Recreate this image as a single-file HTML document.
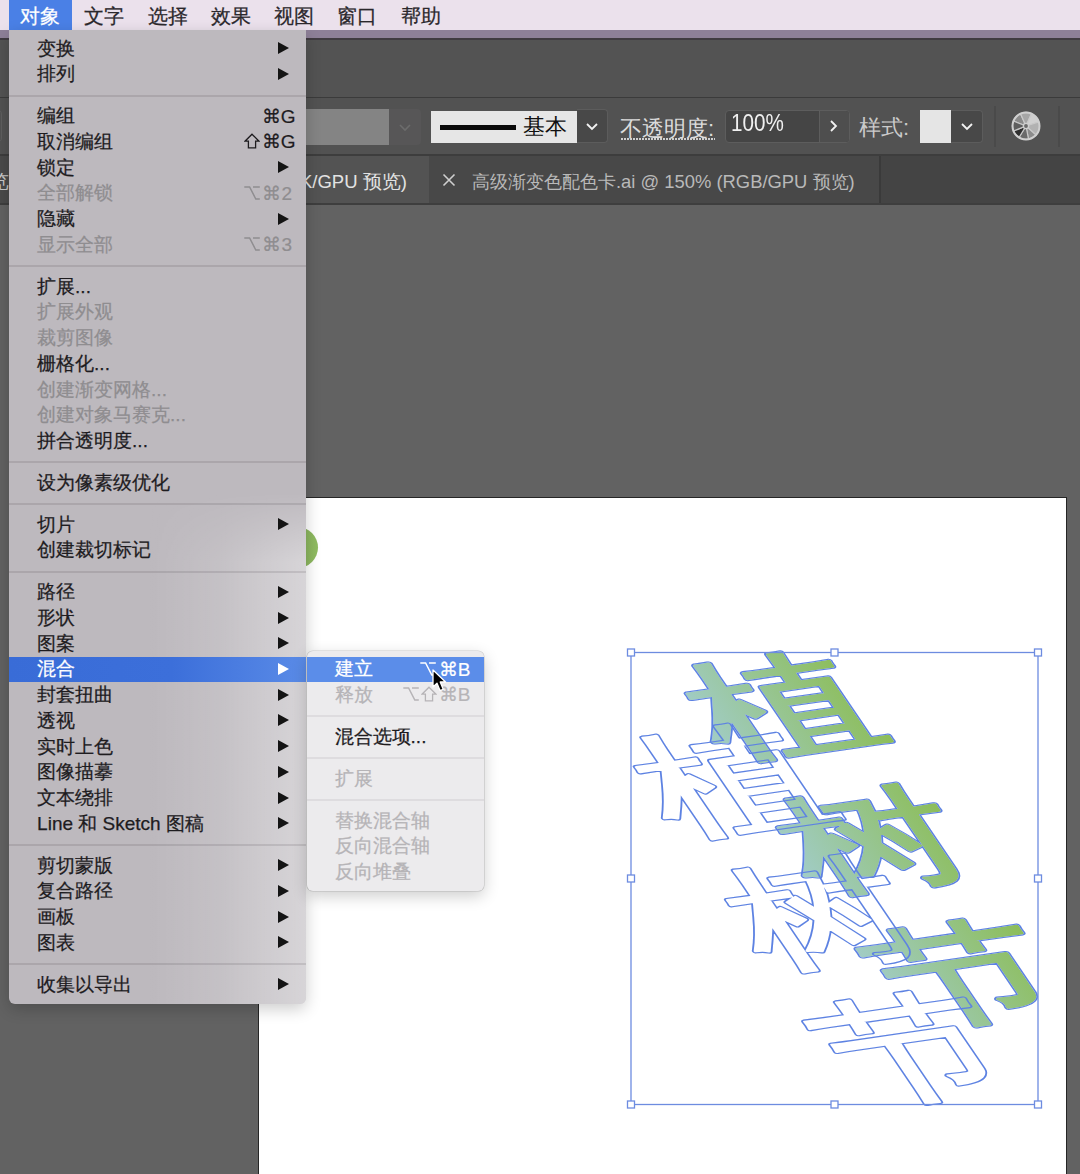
<!DOCTYPE html>
<html><head><meta charset="utf-8">
<style>
*{box-sizing:border-box;margin:0;padding:0}
html,body{width:1080px;height:1174px;overflow:hidden;background:#626262;font-family:"Liberation Sans",sans-serif}
.a{position:absolute}
.mb{position:absolute;top:0.6px;height:30px;line-height:30px;font-size:19.7px;color:#2b282c;-webkit-text-stroke:0.25px currentColor}
.menu{position:absolute;font-size:19px;color:#1e1c1f}
.t{-webkit-text-stroke:0.25px currentColor}
.row{position:absolute;left:0;right:0;height:25.7px;line-height:25.7px;white-space:nowrap}
.row .t{position:absolute;left:28.1px;top:-0.3px}
.row .k{position:absolute;right:10.5px;top:0;font-size:19px;-webkit-text-stroke:0.2px currentColor}
.dis{color:#8f8d90}
.sep{position:absolute;left:0;right:0;height:2px;background:rgba(40,30,40,0.12)}
.sub .sep{background:rgba(40,30,40,0.07)}
.sub .dis{color:#b6b4b7}
.sub .row .k{right:13px}
.arr{position:absolute;right:17px;width:0;height:0;border-top:6.5px solid transparent;border-bottom:6.5px solid transparent;border-left:11.5px solid #141414}
.tbt{position:absolute;font-size:22px;white-space:nowrap}
</style></head><body>
<!-- menubar -->
<div class="a" style="left:0;top:0;width:1080px;height:30px;background:#ebe1ec">
  <div class="a" style="left:9px;top:0;width:63px;height:30px;background:#4a80e6"></div>
  <div class="mb" style="left:19.8px;color:#fff">对象</div>
  <div class="mb" style="left:84.2px">文字</div>
  <div class="mb" style="left:148px">选择</div>
  <div class="mb" style="left:210.5px">效果</div>
  <div class="mb" style="left:273.5px">视图</div>
  <div class="mb" style="left:337.3px">窗口</div>
  <div class="mb" style="left:401px">帮助</div>
</div>
<div class="a" style="left:0;top:30px;width:1080px;height:8px;background:#8e8098"></div>
<div class="a" style="left:0;top:38px;width:1080px;height:2px;background:#403b41"></div>
<div class="a" style="left:0;top:40px;width:1080px;height:57px;background:#535353"></div>
<div class="a" style="left:0;top:97px;width:1080px;height:1px;background:#3b3b3b"></div>
<div class="a" style="left:0;top:98px;width:1080px;height:56px;background:#525252"></div>
<div class="a" style="left:0;top:154px;width:1080px;height:2px;background:#3d3d3d"></div>
<div class="a" style="left:0;top:156px;width:1080px;height:47px;background:#484848"></div>
<div class="a" style="left:0;top:156px;width:429px;height:47px;background:#535353"></div><div class="a" style="left:0;top:156px;width:9px;height:47px;background:#4a4a4a"></div>
<div class="a" style="left:0;top:203px;width:1080px;height:2px;background:#3e3e3e"></div>

<!-- control bar -->
<div class="a" style="left:-20px;top:109px;width:22px;height:34px;border:1.5px solid #5e5e5e;border-radius:5px"></div>
<div class="a" style="left:300px;top:108.7px;width:89px;height:36px;background:#848484"></div>
<div class="a" style="left:389px;top:108.7px;width:32px;height:36px;background:#575657;border-radius:0 4px 4px 0"></div>
<svg class="a" style="left:397px;top:119px" width="16" height="16"><polyline points="3,6 8,11 13,6" fill="none" stroke="#6c6c6c" stroke-width="1.6"/></svg>
<div class="a" style="left:430.7px;top:111px;width:146px;height:32px;background:#e6e6e6"></div>
<div class="a" style="left:439.6px;top:125px;width:76px;height:4.5px;background:#0a0a0a"></div>
<div class="tbt" style="left:523px;top:111px;line-height:32px;color:#111">基本</div>
<div class="a" style="left:576.7px;top:109.4px;width:31px;height:33.5px;background:#484848;border:1px solid #5c5c5c;border-left:none;border-radius:0 4px 4px 0"></div>
<svg class="a" style="left:584px;top:118px" width="16" height="16"><polyline points="3,6 8,11 13,6" fill="none" stroke="#f2f2f2" stroke-width="1.8"/></svg>
<div class="tbt" style="left:620px;top:112.5px;line-height:32px;color:#dcdcdc">不透明度:</div>
<div class="a" style="left:621px;top:137.8px;width:94px;height:1.8px;background:repeating-linear-gradient(to right,#d0d0d0 0,#d0d0d0 2px,transparent 2px,transparent 3px)"></div>
<div class="a" style="left:725px;top:109.7px;width:125px;height:33.3px;background:#454545;border:1px solid #5d5d5d;border-radius:4px"></div>
<div class="a" style="left:819px;top:110.7px;width:30px;height:31.3px;background:#4e4e4e;border-left:1px solid #5d5d5d;border-radius:0 3px 3px 0"></div>
<svg class="a" style="left:826px;top:118px" width="16" height="16"><polyline points="5,3 10,8 5,13" fill="none" stroke="#f2f2f2" stroke-width="1.8"/></svg>
<div class="tbt" style="left:731px;top:108px;line-height:30px;color:#f0f0f0;font-size:24px;transform:scaleX(0.86);transform-origin:0 0">100%</div>
<div class="tbt" style="left:859px;top:112px;line-height:32px;color:#cacaca">样式:</div>
<div class="a" style="left:919.6px;top:110.4px;width:32px;height:32.6px;background:#e5e5e5"></div>
<div class="a" style="left:951.4px;top:109.7px;width:31.6px;height:33.3px;background:#484848;border:1px solid #5c5c5c;border-left:none;border-radius:0 4px 4px 0"></div>
<svg class="a" style="left:959px;top:118px" width="16" height="16"><polyline points="3,6 8,11 13,6" fill="none" stroke="#f2f2f2" stroke-width="1.8"/></svg>
<div class="a" style="left:994px;top:106px;width:1.5px;height:41px;background:#4a4a4a"></div>
<div class="a" style="left:1058px;top:106px;width:1.5px;height:41px;background:#4a4a4a"></div>
<svg class="a" style="left:1010px;top:110px" width="32" height="32" viewBox="-16 -16 32 32">
  <g stroke="#c9c9c9" stroke-width="1.2">
    <path d="M0 0 L-12.6 -5 A13.5 13.5 0 0 1 -5.5 -12.3Z" fill="#8a8a8a"/>
    <path d="M0 0 L-5.5 -12.3 A13.5 13.5 0 0 1 5.5 -12.3Z" fill="#a6a6a6"/>
    <path d="M0 0 L5.5 -12.3 A13.5 13.5 0 0 1 12.8 -4Z" fill="#d0d0d0"/>
    <path d="M0 0 L12.8 -4 A13.5 13.5 0 0 1 10 9Z" fill="#b2b2b2"/>
    <path d="M0 0 L10 9 A13.5 13.5 0 0 1 2.5 13.2Z" fill="#8c8c8c"/>
    <path d="M0 0 L2.5 13.2 A13.5 13.5 0 0 1 -7 11.5Z" fill="#6a6a6a"/>
    <path d="M0 0 L-7 11.5 A13.5 13.5 0 0 1 -12.5 5Z" fill="#2e2e2e"/>
    <path d="M0 0 L-12.5 5 A13.5 13.5 0 0 1 -12.6 -5Z" fill="#5e5e5e"/>
  </g>
  <circle r="13.5" fill="none" stroke="#cfcfcf" stroke-width="2"/>
  <circle r="2.6" fill="#6a6a6a" stroke="#cfcfcf" stroke-width="1.4"/>
</svg>

<!-- tabs -->
<div class="tbt" style="left:-10px;top:166px;line-height:32px;color:#c8c8c8;font-size:18.5px">览</div>
<div class="tbt" style="left:300px;top:166px;line-height:32px;color:#e2e2e2;font-size:18.5px">K/GPU 预览)</div>
<svg class="a" style="left:442px;top:173px" width="14" height="14"><path d="M1.5 1.5L12.5 12.5M12.5 1.5L1.5 12.5" stroke="#cfcfcf" stroke-width="1.6"/></svg>
<div class="a" style="left:879px;top:156px;width:1.5px;height:47px;background:#3a3a3a"></div><div class="a" style="left:880.5px;top:156px;width:200px;height:47px;background:#444"></div>
<div class="tbt" style="left:472px;top:166px;line-height:32px;color:#b9b9b9;font-size:18.4px">高级渐变色配色卡.ai @ 150% (RGB/GPU 预览)</div>

<!-- artboard -->
<div class="a" style="left:258px;top:497px;width:809px;height:700px;background:#fff;border:1px solid #262626"></div>
<div class="a" style="left:277px;top:526.8px;width:41.2px;height:41.2px;border-radius:50%;background:linear-gradient(to right,#84ab5e,#8fbb60)"></div>

<!-- artwork -->
<svg class="a" style="left:0;top:0;font-family:Liberation Sans,sans-serif;font-size:133.0px" width="1080" height="1174" viewBox="0 0 1080 1174">
<defs><linearGradient id="gr" x1="0" y1="0" x2="1" y2="0"><stop offset="0" stop-color="#a1ccc5"/><stop offset="1" stop-color="#8cbd57"/></linearGradient>
<mask id="m1" maskUnits="userSpaceOnUse" x="0" y="0" width="1080" height="1174">
<g transform="matrix(1.2700 -0.1841 0.5304 0.7800 660.00 664.00)" font-weight="400"><text x="0" y="117.04" fill="#fff" stroke="#fff" stroke-width="6.10" stroke-linejoin="round" stroke-linecap="round">植</text><text x="0" y="288.19" fill="#fff" stroke="#fff" stroke-width="6.10" stroke-linejoin="round" stroke-linecap="round">树</text><text x="0" y="459.35" fill="#fff" stroke="#fff" stroke-width="6.10" stroke-linejoin="round" stroke-linecap="round">节</text></g>
<g transform="matrix(1.2700 -0.1841 0.5304 0.7800 660.00 664.00)" font-weight="400"><text x="0" y="117.04" fill="#000" stroke="#000" stroke-width="3.50" stroke-linejoin="round" stroke-linecap="round">植</text><text x="0" y="288.19" fill="#000" stroke="#000" stroke-width="3.50" stroke-linejoin="round" stroke-linecap="round">树</text><text x="0" y="459.35" fill="#000" stroke="#000" stroke-width="3.50" stroke-linejoin="round" stroke-linecap="round">节</text></g>
</mask>
<mask id="m2" maskUnits="userSpaceOnUse" x="0" y="0" width="1080" height="1174">
<g transform="matrix(1.2700 -0.1841 0.5622 0.8268 607.00 735.00)" font-weight="400"><text x="0" y="117.04" fill="#fff" stroke="#fff" stroke-width="5.10" stroke-linejoin="round" stroke-linecap="round">植</text><text x="0" y="278.51" fill="#fff" stroke="#fff" stroke-width="5.10" stroke-linejoin="round" stroke-linecap="round">树</text><text x="0" y="439.97" fill="#fff" stroke="#fff" stroke-width="5.10" stroke-linejoin="round" stroke-linecap="round">节</text></g>
<g transform="matrix(1.2700 -0.1841 0.5622 0.8268 607.00 735.00)" font-weight="400"><text x="0" y="117.04" fill="#000" stroke="#000" stroke-width="2.50" stroke-linejoin="round" stroke-linecap="round">植</text><text x="0" y="278.51" fill="#000" stroke="#000" stroke-width="2.50" stroke-linejoin="round" stroke-linecap="round">树</text><text x="0" y="439.97" fill="#000" stroke="#000" stroke-width="2.50" stroke-linejoin="round" stroke-linecap="round">节</text></g>
</mask>
</defs>
<g style="font-family:'Liberation Sans',sans-serif;font-size:133.0px">
<g transform="matrix(1.2700 -0.1841 0.5304 0.7800 660.00 664.00)" font-weight="400"><text x="0" y="117.04" fill="url(#gr)" stroke="url(#gr)" stroke-width="3.50" stroke-linejoin="round" stroke-linecap="round">植</text><text x="0" y="288.19" fill="url(#gr)" stroke="url(#gr)" stroke-width="3.50" stroke-linejoin="round" stroke-linecap="round">树</text><text x="0" y="459.35" fill="url(#gr)" stroke="url(#gr)" stroke-width="3.50" stroke-linejoin="round" stroke-linecap="round">节</text></g>
<rect x="0" y="0" width="1080" height="1174" fill="#5d82e2" mask="url(#m2)"/>
<rect x="0" y="0" width="1080" height="1174" fill="#5d82e2" mask="url(#m1)"/>
</g>
<rect x="631.0" y="652.5" width="407.0" height="452.0" fill="none" stroke="#6d8ce0" stroke-width="1.3"/>
<rect x="627.5" y="649.0" width="7" height="7" fill="#fff" stroke="#6d8ce0" stroke-width="1.3"/>
<rect x="627.5" y="875.0" width="7" height="7" fill="#fff" stroke="#6d8ce0" stroke-width="1.3"/>
<rect x="627.5" y="1101.0" width="7" height="7" fill="#fff" stroke="#6d8ce0" stroke-width="1.3"/>
<rect x="831.0" y="649.0" width="7" height="7" fill="#fff" stroke="#6d8ce0" stroke-width="1.3"/>
<rect x="831.0" y="1101.0" width="7" height="7" fill="#fff" stroke="#6d8ce0" stroke-width="1.3"/>
<rect x="1034.5" y="649.0" width="7" height="7" fill="#fff" stroke="#6d8ce0" stroke-width="1.3"/>
<rect x="1034.5" y="875.0" width="7" height="7" fill="#fff" stroke="#6d8ce0" stroke-width="1.3"/>
<rect x="1034.5" y="1101.0" width="7" height="7" fill="#fff" stroke="#6d8ce0" stroke-width="1.3"/>
</svg>

<!-- MAIN MENU -->
<div class="menu" style="left:9px;top:30px;width:297px;height:973.50px;background:#bdb9be;border-radius:0 0 6px 6px;box-shadow:0 5px 16px rgba(0,0,0,0.2);overflow:hidden">
<div class="a" style="left:140px;top:462px;width:157px;height:520px;background:linear-gradient(to right,rgba(255,255,255,0) 0%,rgba(255,255,255,0.12) 45%,rgba(255,255,255,0.4) 100%);-webkit-mask-image:linear-gradient(to bottom,transparent 0,#000 70px)"></div>
<div class="row" style="top:6.00px"><span class="t">变换</span><span class="arr" style="top:6.35px;"></span></div>
<div class="row" style="top:31.70px"><span class="t">排列</span><span class="arr" style="top:6.35px;"></span></div>
<div class="sep" style="top:64.50px"></div>
<div class="row" style="top:73.60px"><span class="t">编组</span><span class="k">⌘G</span></div>
<div class="row" style="top:99.30px"><span class="t">取消编组</span><span class="k"><svg width="16" height="16" style="vertical-align:-1px;margin-right:1.5px" viewBox="0 0 16 16"><path d="M8 1.2 L15 8.2 L11.6 8.2 L11.6 14.9 L4.4 14.9 L4.4 8.2 L1 8.2 Z" fill="none" stroke="currentColor" stroke-width="1.3"/></svg>⌘G</span></div>
<div class="row" style="top:125.00px"><span class="t">锁定</span><span class="arr" style="top:6.35px;"></span></div>
<div class="row dis" style="top:150.70px"><span class="t">全部解锁</span><span class="k" style="right:14px"><svg width="16" height="14" style="vertical-align:0px;margin-right:2.5px" viewBox="0 0 16 14"><path d="M0.3 1 H5.6 L11.8 13 H15.8 M9 1 H15.8" fill="none" stroke="currentColor" stroke-width="1.5"/></svg>⌘2</span></div>
<div class="row" style="top:176.40px"><span class="t">隐藏</span><span class="arr" style="top:6.35px;"></span></div>
<div class="row dis" style="top:202.10px"><span class="t">显示全部</span><span class="k" style="right:14px"><svg width="16" height="14" style="vertical-align:0px;margin-right:2.5px" viewBox="0 0 16 14"><path d="M0.3 1 H5.6 L11.8 13 H15.8 M9 1 H15.8" fill="none" stroke="currentColor" stroke-width="1.5"/></svg>⌘3</span></div>
<div class="sep" style="top:234.90px"></div>
<div class="row" style="top:244.00px"><span class="t">扩展...</span></div>
<div class="row dis" style="top:269.70px"><span class="t">扩展外观</span></div>
<div class="row dis" style="top:295.40px"><span class="t">裁剪图像</span></div>
<div class="row" style="top:321.10px"><span class="t">栅格化...</span></div>
<div class="row dis" style="top:346.80px"><span class="t">创建渐变网格...</span></div>
<div class="row dis" style="top:372.50px"><span class="t">创建对象马赛克...</span></div>
<div class="row" style="top:398.20px"><span class="t">拼合透明度...</span></div>
<div class="sep" style="top:431.00px"></div>
<div class="row" style="top:440.10px"><span class="t">设为像素级优化</span></div>
<div class="sep" style="top:472.90px"></div>
<div class="row" style="top:482.00px"><span class="t">切片</span><span class="arr" style="top:6.35px;"></span></div>
<div class="row" style="top:507.70px"><span class="t">创建裁切标记</span></div>
<div class="sep" style="top:540.50px"></div>
<div class="row" style="top:549.60px"><span class="t">路径</span><span class="arr" style="top:6.35px;"></span></div>
<div class="row" style="top:575.30px"><span class="t">形状</span><span class="arr" style="top:6.35px;"></span></div>
<div class="row" style="top:601.00px"><span class="t">图案</span><span class="arr" style="top:6.35px;"></span></div>
<div class="row" style="top:626.70px;background:linear-gradient(to right,#396cd7 0%,#3c6fda 55%,#5a8be7 100%);color:#fff"><span class="t">混合</span><span class="arr" style="top:6.35px;border-left-color:#fff"></span></div>
<div class="row" style="top:652.40px"><span class="t">封套扭曲</span><span class="arr" style="top:6.35px;"></span></div>
<div class="row" style="top:678.10px"><span class="t">透视</span><span class="arr" style="top:6.35px;"></span></div>
<div class="row" style="top:703.80px"><span class="t">实时上色</span><span class="arr" style="top:6.35px;"></span></div>
<div class="row" style="top:729.50px"><span class="t">图像描摹</span><span class="arr" style="top:6.35px;"></span></div>
<div class="row" style="top:755.20px"><span class="t">文本绕排</span><span class="arr" style="top:6.35px;"></span></div>
<div class="row" style="top:780.90px"><span class="t">Line 和 Sketch 图稿</span><span class="arr" style="top:6.35px;"></span></div>
<div class="sep" style="top:813.70px"></div>
<div class="row" style="top:822.80px"><span class="t">剪切蒙版</span><span class="arr" style="top:6.35px;"></span></div>
<div class="row" style="top:848.50px"><span class="t">复合路径</span><span class="arr" style="top:6.35px;"></span></div>
<div class="row" style="top:874.20px"><span class="t">画板</span><span class="arr" style="top:6.35px;"></span></div>
<div class="row" style="top:899.90px"><span class="t">图表</span><span class="arr" style="top:6.35px;"></span></div>
<div class="sep" style="top:932.70px"></div>
<div class="row" style="top:941.80px"><span class="t">收集以导出</span><span class="arr" style="top:6.35px;"></span></div>
</div>
<!-- SUB MENU -->
<div class="menu sub" style="left:306.5px;top:650.7px;width:177px;height:240.50px;background:#ecebed;border-radius:6px;box-shadow:0 0 0 0.6px rgba(0,0,0,0.16),0 5px 16px rgba(0,0,0,0.2);overflow:hidden">
<div class="row" style="top:6.00px;background:#5b8de9;color:#fff"><span class="t">建立</span><span class="k"><svg width="16" height="14" style="vertical-align:0px;margin-right:2.5px" viewBox="0 0 16 14"><path d="M0.3 1 H5.6 L11.8 13 H15.8 M9 1 H15.8" fill="none" stroke="currentColor" stroke-width="1.5"/></svg>⌘B</span></div>
<div class="row dis" style="top:31.70px"><span class="t">释放</span><span class="k"><svg width="16" height="14" style="vertical-align:0px;margin-right:2.5px" viewBox="0 0 16 14"><path d="M0.3 1 H5.6 L11.8 13 H15.8 M9 1 H15.8" fill="none" stroke="currentColor" stroke-width="1.5"/></svg><svg width="16" height="16" style="vertical-align:-1px;margin-right:1.5px" viewBox="0 0 16 16"><path d="M8 1.2 L15 8.2 L11.6 8.2 L11.6 14.9 L4.4 14.9 L4.4 8.2 L1 8.2 Z" fill="none" stroke="currentColor" stroke-width="1.3"/></svg>⌘B</span></div>
<div class="sep" style="top:64.50px"></div>
<div class="row" style="top:73.60px"><span class="t">混合选项...</span></div>
<div class="sep" style="top:106.40px"></div>
<div class="row dis" style="top:115.50px"><span class="t">扩展</span></div>
<div class="sep" style="top:148.30px"></div>
<div class="row dis" style="top:157.40px"><span class="t">替换混合轴</span></div>
<div class="row dis" style="top:183.10px"><span class="t">反向混合轴</span></div>
<div class="row dis" style="top:208.80px"><span class="t">反向堆叠</span></div>
</div>
<!-- cursor -->
<svg class="a" style="left:423px;top:660px" width="30" height="36" viewBox="0 0 30 36">
<path d="M10 10 L10 27 L14 23.2 L17 30.6 L20.2 29.3 L17.2 22 L22.6 22 Z" fill="#000" stroke="#fff" stroke-width="1.3" stroke-linejoin="round"/>
</svg>
</body></html>
